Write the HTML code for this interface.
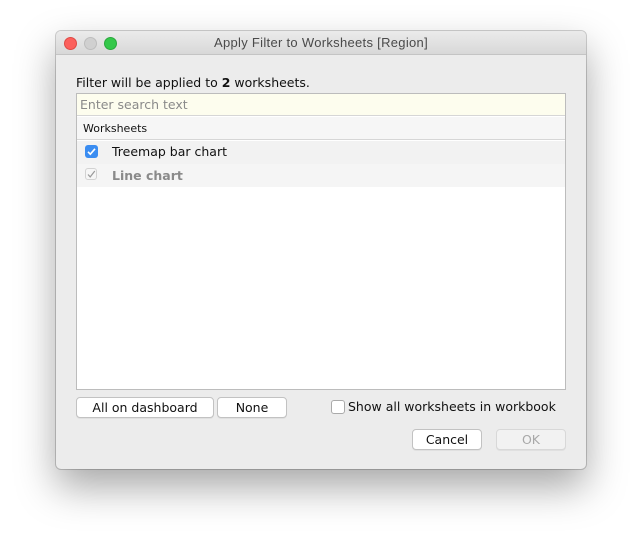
<!DOCTYPE html>
<html><head><style>
body{margin:0;width:642px;height:549px;background:#fff;position:relative;overflow:hidden;font-family:"DejaVu Sans","Liberation Sans",sans-serif;font-size:12.5px;color:#111}
.a{position:absolute}
.win{left:56px;top:31px;width:530px;height:438px;background:#ececec;border-radius:5px;box-shadow:0 18px 40px rgba(0,0,0,.35),0 0 0 1px rgba(0,0,0,.18)}
.title{left:0;top:0;width:530px;height:23px;background:linear-gradient(#ebebeb,#d8d8d8);border-bottom:1px solid #c4c4c4;border-radius:5px 5px 0 0;text-align:center;line-height:24px;color:#4a4a4a;font-size:13px;font-family:"Liberation Sans",sans-serif;letter-spacing:0.3px}
.dot{width:12px;height:12px;border-radius:50%;top:6px}
.btn{background:#fff;border:1px solid #c2c2c2;border-radius:4px;height:19px;line-height:19px;text-align:center;box-shadow:0 1px 0 rgba(0,0,0,.05)}
.cb{width:12px;height:12px;border-radius:3px}
</style></head><body>
<div class="a win">
 <div class="a title">Apply Filter to Worksheets [Region]</div>
 <div class="a dot" style="left:8px;background:#fc605c;border:1px solid #de4a45;width:11px;height:11px"></div>
 <div class="a dot" style="left:28px;background:#d0d0d0;border:1px solid #bdbdbd;width:11px;height:11px"></div>
 <div class="a dot" style="left:48px;background:#34c84a;border:1px solid #2aa83d;width:11px;height:11px"></div>
 <div class="a" style="left:20px;top:44px">Filter will be applied to <b>2</b> worksheets.</div>
 <div class="a" style="left:20px;top:62px;width:488px;height:295px;background:#fff;border:1px solid #bcbcbc">
  <div class="a" style="left:0;top:0;width:488px;height:22px;background:#fdfdee;border-bottom:1px solid #d6d6d6;color:#8a8a8a;line-height:22px;padding-left:3px;box-sizing:border-box">Enter search text</div>
  <div class="a" style="left:0;top:23px;width:488px;height:23px;background:#f6f6f6;border-bottom:1px solid #d6d6d6;font-size:11px;line-height:23px;padding-left:6px;box-sizing:border-box">Worksheets</div>
  <div class="a" style="left:0;top:47px;width:488px;height:23px;background:#f2f2f2"></div>
  <div class="a cb" style="left:8px;top:51px;width:13px;height:13px;background:#3b8df1"><svg width="13" height="13"><path d="M3 6.8l2.3 2.4L10 3.8" stroke="#fff" stroke-width="1.6" fill="none"/></svg></div>
  <div class="a" style="left:35px;top:50px">Treemap bar chart</div>
  <div class="a" style="left:0;top:70px;width:488px;height:23px;background:#f5f5f5"></div>
  <div class="a cb" style="left:8px;top:74px;width:12px;height:12px;border:1px solid #d2d2d2;background:#f6f6f6;box-sizing:border-box"><svg width="12" height="12" style="position:absolute;left:-1px;top:-1px"><path d="M3 6.5l2.2 2.4L9.8 3" stroke="#9a9a9a" stroke-width="1.2" fill="none"/></svg></div>
  <div class="a" style="left:35px;top:74px;color:#8a8a8a;font-weight:bold">Line chart</div>
 </div>
 <div class="a btn" style="left:20px;top:366px;width:136px">All on dashboard</div>
 <div class="a btn" style="left:161px;top:366px;width:68px">None</div>
 <div class="a" style="left:275px;top:369px;width:12px;height:12px;border:1px solid #aaa;border-radius:3px;background:#fff"></div>
 <div class="a" style="left:292px;top:368px">Show all worksheets in workbook</div>
 <div class="a btn" style="left:356px;top:398px;width:68px">Cancel</div>
 <div class="a btn" style="left:440px;top:398px;width:68px;background:#f2f2f2;border-color:#d8d8d8;color:#a8a8a8">OK</div>
</div>
</body></html>
